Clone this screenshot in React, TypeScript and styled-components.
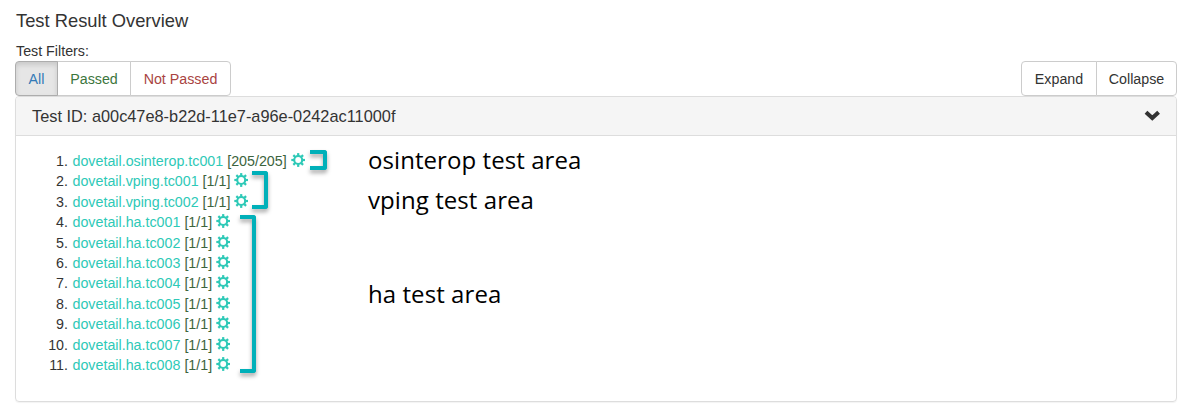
import React from "react";
import styled, { createGlobalStyle } from "styled-components";

const GlobalStyle = createGlobalStyle`
  * { box-sizing: border-box; }
  body {
    margin: 0;
    background: #fff;
    color: #333;
    font-family: "Liberation Sans", Arial, sans-serif;
    font-size: 14.28px;
    line-height: 20.42px;
  }
`;

const Page = styled.main`
  position: relative;
  width: 1196px;
  height: 416px;
  padding: 9px 19px 0 15px;
  overflow: hidden;
`;

const Title = styled.h1`
  margin: 0;
  padding: 1px 0 0 1px;
  font-size: 18.33px;
  font-weight: 400;
  line-height: 21px;
`;

const FilterLabel = styled.div`
  margin-top: 10px;
  padding-left: 1px;
  height: 20px;
`;

const Toolbar = styled.div`
  display: flex;
  justify-content: space-between;
`;

const ButtonGroup = styled.div`
  display: flex;
  height: 35px;
`;

const Button = styled.button<{ $color?: string; $active?: boolean; $width: number }>`
  width: ${(p) => p.$width}px;
  height: 35px;
  padding: 1px 0 0;
  border: 1px solid ${(p) => (p.$active ? "#adadad" : "#ccc")};
  background: ${(p) => (p.$active ? "#e6e6e6" : "#fff")};
  box-shadow: ${(p) => (p.$active ? "inset 0 3px 5px rgba(0,0,0,.125)" : "none")};
  color: ${(p) => p.$color ?? "#333"};
  font: inherit;
  position: relative;
  z-index: ${(p) => (p.$active ? 1 : 0)};
  & + & { margin-left: -1px; }
  &:first-child { border-radius: 4px 0 0 4px; }
  &:last-child { border-radius: 0 4px 4px 0; }
`;

const Panel = styled.section`
  height: 306px;
  border: 1px solid #ddd;
  border-radius: 4px;
  box-shadow: 0 1px 1px rgba(0, 0, 0, 0.05);
`;

const PanelHeader = styled.header`
  display: flex;
  align-items: center;
  justify-content: space-between;
  height: 39px;
  padding: 0 16px;
  border-bottom: 1px solid #ddd;
  border-radius: 3px 3px 0 0;
  background: #f5f5f5;
  font-size: 16.33px;
`;

const TestList = styled.ol`
  margin: 0;
  padding: 15px 0 0 21px;
  list-style: none;
`;

const TestItem = styled.li`
  display: flex;
  height: 20.42px;
  white-space: pre;
`;

const Index = styled.span`
  width: 31px;
  margin-right: 4.5px;
  text-align: right;
`;

const TestLink = styled.a`
  color: #2ec9b7;
`;

const Score = styled.span`
  margin: 0 4px;
  color: #3c643d;
`;

const GearIcon = styled.svg`
  width: 14px;
  height: 14px;
  margin-top: 2px;
`;

const Note = styled.div<{ $top: number }>`
  position: absolute;
  left: 368px;
  top: ${(p) => p.$top}px;
  color: #000;
  font-family: "Open Sans", sans-serif;
  font-size: 24px;
  line-height: 32px;
  letter-spacing: 0.07px;
  white-space: nowrap;
`;

const Bracket = styled.div<{ $x: number; $y: number; $w: number; $h: number }>`
  position: absolute;
  left: ${(p) => p.$x}px;
  top: ${(p) => p.$y}px;
  width: ${(p) => p.$w}px;
  height: ${(p) => p.$h}px;
  border: 4px solid #00b0b9;
  border-left: 0;
  border-radius: 0 3px 3px 0;
  filter: drop-shadow(0 3px 2px rgba(0, 0, 0, 0.35));
`;

const tests: [string, string][] = [
  ["dovetail.osinterop.tc001", "205/205"],
  ["dovetail.vping.tc001", "1/1"],
  ["dovetail.vping.tc002", "1/1"],
  ...Array.from({ length: 8 }, (_, i): [string, string] => [`dovetail.ha.tc00${i + 1}`, "1/1"]),
];

const Gear = () => (
  <GearIcon viewBox="0 0 14 14" fill="none" stroke="#2ec9b7">
    <circle cx="7.2" cy="7" r="4" strokeWidth="2.1" />
    {[0, 45, 90, 135, 180, 225, 270, 315].map((a) => (
      <path key={a} d="M7.2 .1V2.8" strokeWidth="2.2" transform={`rotate(${a} 7.2 7)`} />
    ))}
  </GearIcon>
);

export default function App() {
  return (
    <Page>
      <GlobalStyle />
      <Title>Test Result Overview</Title>
      <FilterLabel>Test Filters:</FilterLabel>
      <Toolbar>
        <ButtonGroup>
          <Button $width={43} $active $color="#337ab7">All</Button>
          <Button $width={74} $color="#3c763d">Passed</Button>
          <Button $width={101} $color="#a94442">Not Passed</Button>
        </ButtonGroup>
        <ButtonGroup>
          <Button $width={76}>Expand</Button>
          <Button $width={81}>Collapse</Button>
        </ButtonGroup>
      </Toolbar>
      <Panel>
        <PanelHeader>
          <span>Test ID: a00c47e8-b22d-11e7-a96e-0242ac11000f</span>
          <svg width="16" height="12" viewBox="0 0 16 12">
            <path d="M2 2.2 8.3 8 14.6 2.2" fill="none" stroke="#333" strokeWidth="4" />
          </svg>
        </PanelHeader>
        <TestList>
          {tests.map(([name, score], i) => (
            <TestItem key={name}>
              <Index>{i + 1}.</Index>
              <TestLink>{name}</TestLink>
              <Score>[{score}]</Score>
              <Gear />
            </TestItem>
          ))}
        </TestList>
      </Panel>
      <Bracket $x={310} $y={150} $w={17} $h={20} />
      <Bracket $x={252} $y={171} $w={16} $h={38} />
      <Bracket $x={240} $y={215} $w={16} $h={158} />
      <Note $top={144}>osinterop test area</Note>
      <Note $top={184}>vping test area</Note>
      <Note $top={278}>ha test area</Note>
    </Page>
  );
}
